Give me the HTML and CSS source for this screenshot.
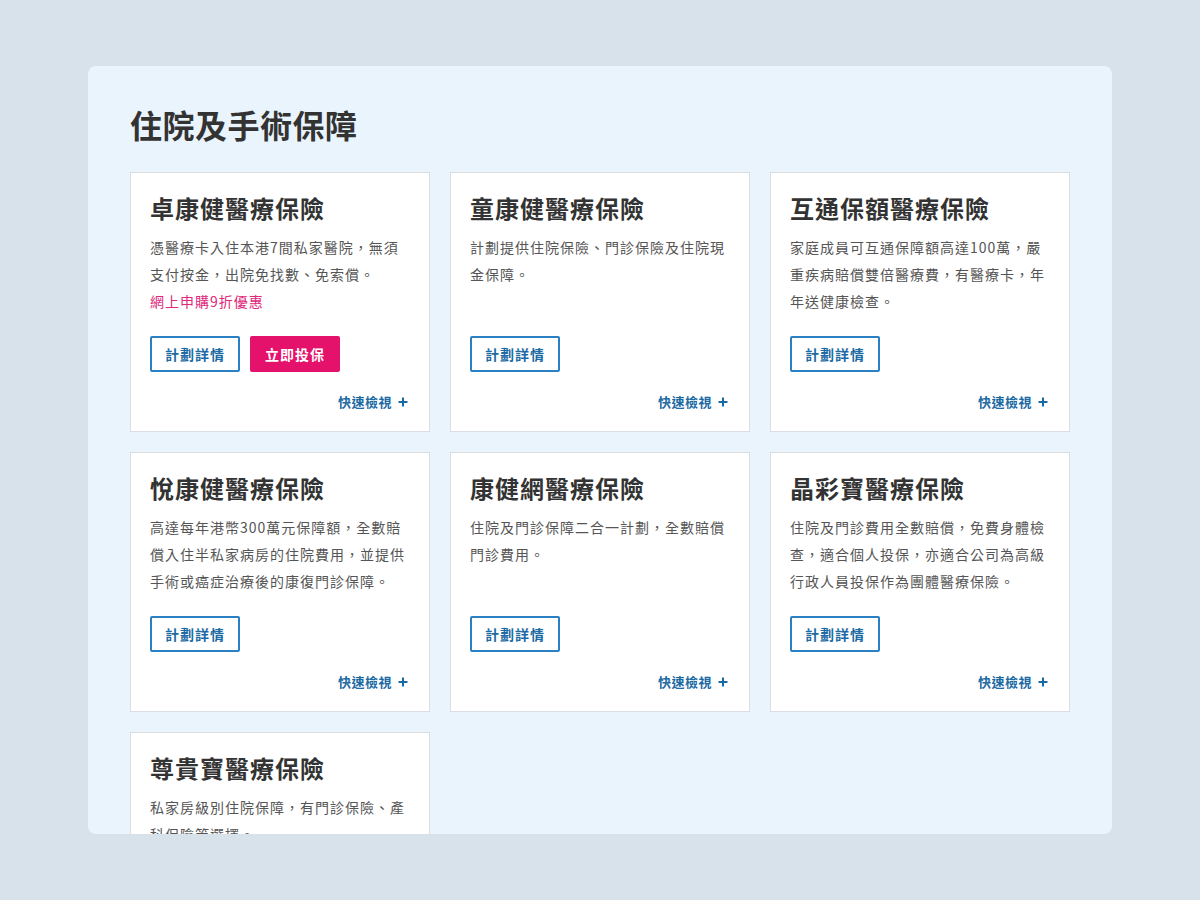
FILE: index.html
```html
<!DOCTYPE html>
<html lang="zh-Hant">
<head>
<meta charset="utf-8">
<title>住院及手術保障</title>
<link rel="stylesheet" href="styles.css">
</head>
<body>
<main class="panel">
  <h1 class="heading">住院及手術保障</h1>
  <div class="grid">
    <section class="card">
      <h2 class="card-title">卓康健醫療保險</h2>
      <div class="desc">
        <p>憑醫療卡入住本港7間私家醫院，無須支付按金，出院免找數、免索償。</p>
        <p class="promo">網上申購9折優惠</p>
      </div>
      <div class="actions">
        <a class="btn btn-outline">計劃詳情</a>
        <a class="btn btn-solid">立即投保</a>
      </div>
      <div class="quick">快速檢視<svg class="plus" viewBox="0 0 10 10" width="10" height="10"><path d="M5 0.5v9M0.5 5h9" stroke="currentColor" stroke-width="2"/></svg></div>
    </section>
    <section class="card">
      <h2 class="card-title">童康健醫療保險</h2>
      <div class="desc">
        <p>計劃提供住院保險、門診保險及住院現金保障。</p>
      </div>
      <div class="actions">
        <a class="btn btn-outline">計劃詳情</a>
      </div>
      <div class="quick">快速檢視<svg class="plus" viewBox="0 0 10 10" width="10" height="10"><path d="M5 0.5v9M0.5 5h9" stroke="currentColor" stroke-width="2"/></svg></div>
    </section>
    <section class="card">
      <h2 class="card-title">互通保額醫療保險</h2>
      <div class="desc">
        <p>家庭成員可互通保障額高達100萬，嚴重疾病賠償雙倍醫療費，有醫療卡，年年送健康檢查。</p>
      </div>
      <div class="actions">
        <a class="btn btn-outline">計劃詳情</a>
      </div>
      <div class="quick">快速檢視<svg class="plus" viewBox="0 0 10 10" width="10" height="10"><path d="M5 0.5v9M0.5 5h9" stroke="currentColor" stroke-width="2"/></svg></div>
    </section>
    <section class="card">
      <h2 class="card-title">悅康健醫療保險</h2>
      <div class="desc">
        <p>高達每年港幣300萬元保障額，全數賠償入住半私家病房的住院費用，並提供手術或癌症治療後的康復門診保障。</p>
      </div>
      <div class="actions">
        <a class="btn btn-outline">計劃詳情</a>
      </div>
      <div class="quick">快速檢視<svg class="plus" viewBox="0 0 10 10" width="10" height="10"><path d="M5 0.5v9M0.5 5h9" stroke="currentColor" stroke-width="2"/></svg></div>
    </section>
    <section class="card">
      <h2 class="card-title">康健網醫療保險</h2>
      <div class="desc">
        <p>住院及門診保障二合一計劃，全數賠償門診費用。</p>
      </div>
      <div class="actions">
        <a class="btn btn-outline">計劃詳情</a>
      </div>
      <div class="quick">快速檢視<svg class="plus" viewBox="0 0 10 10" width="10" height="10"><path d="M5 0.5v9M0.5 5h9" stroke="currentColor" stroke-width="2"/></svg></div>
    </section>
    <section class="card">
      <h2 class="card-title">晶彩寶醫療保險</h2>
      <div class="desc">
        <p>住院及門診費用全數賠償，免費身體檢查，適合個人投保，亦適合公司為高級行政人員投保作為團體醫療保險。</p>
      </div>
      <div class="actions">
        <a class="btn btn-outline">計劃詳情</a>
      </div>
      <div class="quick">快速檢視<svg class="plus" viewBox="0 0 10 10" width="10" height="10"><path d="M5 0.5v9M0.5 5h9" stroke="currentColor" stroke-width="2"/></svg></div>
    </section>
    <section class="card">
      <h2 class="card-title">尊貴寶醫療保險</h2>
      <div class="desc">
        <p>私家房級別住院保障，有門診保險、產科保險等選擇。</p>
      </div>
      <div class="actions">
        <a class="btn btn-outline">計劃詳情</a>
      </div>
      <div class="quick">快速檢視<svg class="plus" viewBox="0 0 10 10" width="10" height="10"><path d="M5 0.5v9M0.5 5h9" stroke="currentColor" stroke-width="2"/></svg></div>
    </section>
  </div>
</main>
</body>
</html>
```
FILE: styles.css
```css
html, body {
  margin: 0;
  padding: 0;
}
body {
  background: #d8e2eb;
  font-family: "Noto Sans CJK TC", "Noto Sans", sans-serif;
  color: #333;
}
.panel {
  box-sizing: border-box;
  width: 1024px;
  height: 768px;
  margin: 66px auto 0;
  padding: 38px 42px 0;
  background: #eaf4fd;
  border-radius: 8px;
  overflow: hidden;
}
.heading {
  margin: 0 0 28px;
  font-size: 32px;
  line-height: 40px;
  font-weight: 700;
  letter-spacing: 0.5px;
  color: #333;
}
.grid {
  display: grid;
  grid-template-columns: repeat(3, 300px);
  gap: 20px;
}
.card {
  box-sizing: border-box;
  background: #fff;
  border: 1px solid #d8dee4;
  padding: 19px 19px 19px;
  display: flex;
  flex-direction: column;
}
.card-title {
  margin: 0 0 10px;
  font-size: 24px;
  line-height: 32px;
  font-weight: 700;
  letter-spacing: 1px;
  color: #333;
}
.desc {
  min-height: 81px;
  font-size: 14px;
  line-height: 27px;
  letter-spacing: 1px;
  color: #555;
}
.desc p {
  margin: 0;
}
.desc .promo {
  color: #e0277a;
}
.actions {
  display: flex;
  gap: 10px;
  margin-top: 21px;
}
.btn {
  box-sizing: border-box;
  display: flex;
  align-items: center;
  justify-content: center;
  width: 90px;
  height: 36px;
  font-size: 14px;
  font-weight: 700;
  letter-spacing: 1px;
  border-radius: 2px;
  cursor: pointer;
}
.btn-outline {
  border: 2px solid #2a80c3;
  color: #1c6aa3;
  background: #fff;
}
.btn-solid {
  background: #e5126b;
  color: #fff;
  border: 2px solid #e5126b;
}
.quick {
  margin-top: 20px;
  align-self: flex-end;
  display: flex;
  align-items: center;
  gap: 6px;
  font-size: 13px;
  line-height: 20px;
  font-weight: 700;
  letter-spacing: 0.5px;
  color: #1c6aa3;
  margin-right: 2px;
}
.plus {
  display: block;
}
```
